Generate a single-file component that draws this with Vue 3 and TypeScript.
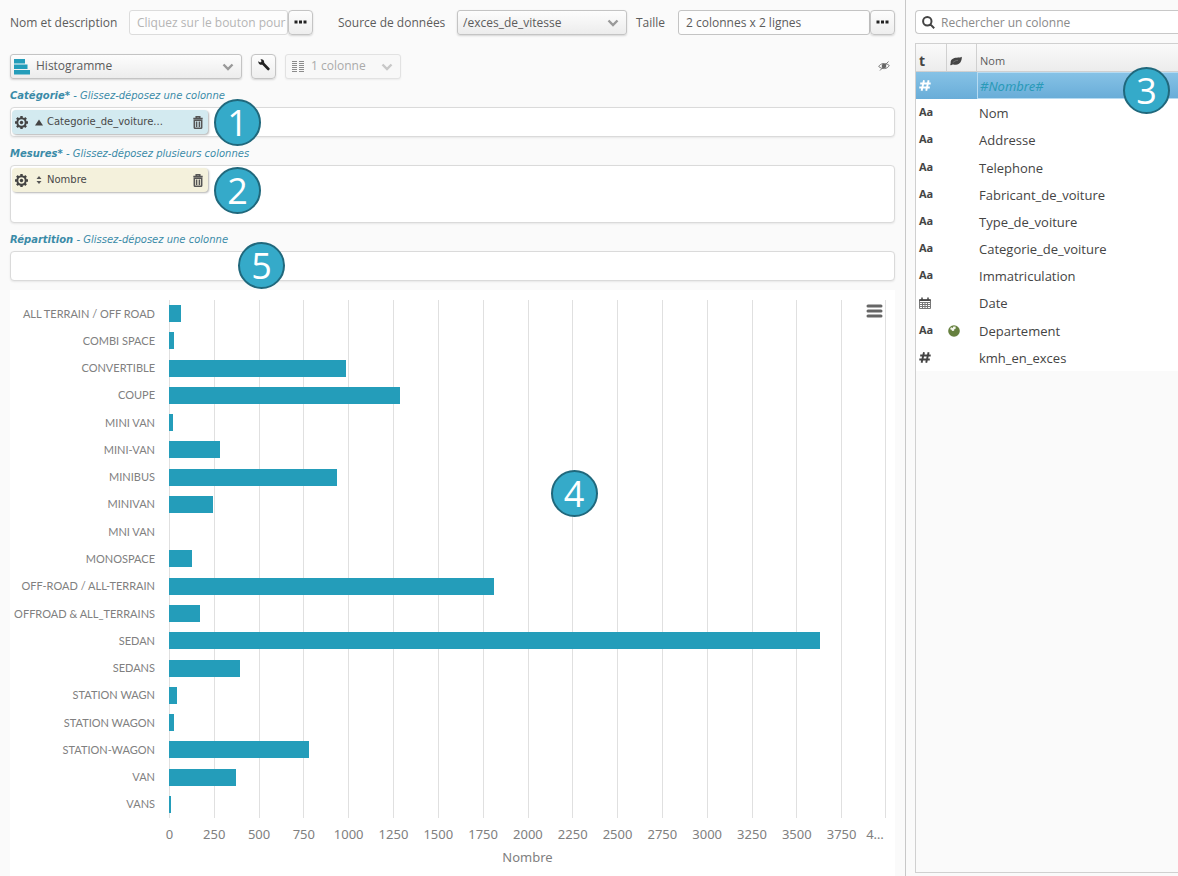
<script setup lang="ts">
import { ref } from 'vue'

interface Bar {
  label: string
  value: number
}

interface Column {
  name: string
  type: 'number' | 'text' | 'date'
  geo?: boolean
  selected?: boolean
}

const axisMax = 4000
const bars: Bar[] = [
  { label: 'ALL TERRAIN / OFF ROAD', value: 67 },
  { label: 'COMBI SPACE', value: 30 },
  { label: 'CONVERTIBLE', value: 988 },
  { label: 'COUPE', value: 1290 },
  { label: 'MINI VAN', value: 24 },
  { label: 'MINI-VAN', value: 283 },
  { label: 'MINIBUS', value: 940 },
  { label: 'MINIVAN', value: 247 },
  { label: 'MNI VAN', value: 0 },
  { label: 'MONOSPACE', value: 127 },
  { label: 'OFF-ROAD / ALL-TERRAIN', value: 1811 },
  { label: 'OFFROAD & ALL_TERRAINS', value: 174 },
  { label: 'SEDAN', value: 3630 },
  { label: 'SEDANS', value: 397 },
  { label: 'STATION WAGN', value: 46 },
  { label: 'STATION WAGON', value: 30 },
  { label: 'STATION-WAGON', value: 782 },
  { label: 'VAN', value: 376 },
  { label: 'VANS', value: 10 },
]
const ticks: string[] = [...Array.from({ length: 16 }, (_, i) => String(i * 250)), '4…']

const columns: Column[] = [
  { name: '#Nombre#', type: 'number', selected: true },
  { name: 'Nom', type: 'text' },
  { name: 'Addresse', type: 'text' },
  { name: 'Telephone', type: 'text' },
  { name: 'Fabricant_de_voiture', type: 'text' },
  { name: 'Type_de_voiture', type: 'text' },
  { name: 'Categorie_de_voiture', type: 'text' },
  { name: 'Immatriculation', type: 'text' },
  { name: 'Date', type: 'date' },
  { name: 'Departement', type: 'text', geo: true },
  { name: 'kmh_en_exces', type: 'number' },
]

const zones = [
  {
    title: 'Catégorie*',
    hint: 'Glissez-déposez une colonne',
    step: 1,
    chip: { text: 'Categorie_de_voiture...', kind: 'category' },
  },
  {
    title: 'Mesures*',
    hint: 'Glissez-déposez plusieurs colonnes',
    step: 2,
    chip: { text: 'Nombre', kind: 'measure' },
  },
  { title: 'Répartition', hint: 'Glissez-déposez une colonne', step: 5, chip: null },
]

const teeth = [0, 45, 90, 135]

const description = ref('')
const source = ref('/exces_de_vitesse')
const size = ref('2 colonnes x 2 lignes')
const chartType = ref('Histogramme')
const layout = ref('1 colonne')
const search = ref('')
</script>

<template>
  <div class="page">
    <main class="editor">
      <div class="bar">
        <label class="lbl wide" for="desc">Nom et description</label>
        <input id="desc" v-model="description" class="field desc" placeholder="Cliquez sur le bouton pour" />
        <button class="btn" aria-label="Modifier la description">
          <svg width="13" height="4" viewBox="0 0 13 4"><path d="M.5.5h3v3h-3zM5 .5h3v3H5zM9.500.5h3v3h-3z" /></svg>
        </button>
        <label class="lbl wide second" for="source">Source de données</label>
        <div class="pick source">
          <select id="source" v-model="source"><option>/exces_de_vitesse</option></select>
          <svg class="chev" width="12" height="8" viewBox="0 0 12 8"><path d="M1.500 1.500 6 6l4.500-4.500" /></svg>
        </div>
        <label class="lbl size-lbl" for="size">Taille</label>
        <input id="size" v-model="size" class="field size" />
        <button class="btn" aria-label="Modifier la taille">
          <svg width="13" height="4" viewBox="0 0 13 4"><path d="M.5.5h3v3h-3zM5 .5h3v3H5zM9.500.5h3v3h-3z" /></svg>
        </button>
      </div>

      <div class="bar tools">
        <div class="pick type">
          <select v-model="chartType" aria-label="Type de graphique"><option>Histogramme</option></select>
          <svg class="lead" width="16" height="16" viewBox="0 0 16 16">
            <path fill="#249dba" d="M0 0h11v4.500H0zM0 5.500h13.500V10H0zM0 11h16v4.500H0z" />
          </svg>
          <svg class="chev" width="12" height="8" viewBox="0 0 12 8"><path d="M1.500 1.500 6 6l4.500-4.500" /></svg>
        </div>
        <button class="btn" aria-label="Options">
          <svg width="12" height="12" viewBox="0 0 12 12">
            <path d="M.3 2.200 2.200 3.600 3.600 2.300 2.500.3C4.600-.2 6.500 1.200 6.200 3.700L11.500 9.200c.9 1.100-.9 2.900-2.100 1.900L4.300 5.700C2.200 6.300 0 4.700.3 2.200z" />
          </svg>
        </button>
        <div class="pick layout off">
          <select v-model="layout" disabled aria-label="Disposition"><option>1 colonne</option></select>
          <svg class="lead" width="13" height="12" viewBox="0 0 13 12">
            <path stroke="#8c8c8c" fill="none" d="M0 1.500h5M0 3.500h5M0 5.500h5M0 7.500h5M0 9.500h5M0 11.500h5M7 1.500h5M7 3.500h5M7 5.500h5M7 7.500h5M7 9.500h5M7 11.500h5" />
          </svg>
          <svg class="chev" width="12" height="8" viewBox="0 0 12 8"><path d="M1.500 1.500 6 6l4.500-4.500" /></svg>
        </div>
        <button class="eye" aria-label="Masquer">
          <svg width="12" height="10" viewBox="0 0 12 10">
            <path fill="none" stroke="#777" d="M.7 5.500C2.500 2.300 7 1.300 11.300 4.500 9 8.300 4.500 8.600.7 5.500zM2 9.500 10.500.5" />
            <circle cx="6" cy="5" r="2.300" fill="#666" />
          </svg>
        </button>
      </div>

      <section v-for="z in zones" :key="z.step" class="zone">
        <h2><b>{{ z.title }}</b> - {{ z.hint }}</h2>
        <div class="drop" :class="{ tall: z.step === 2 }">
          <div v-if="z.chip" class="chip" :class="z.chip.kind">
            <button class="ico" aria-label="Réglages">
              <svg width="13" height="13" viewBox="0 0 13 13">
                <path
                  v-for="a in teeth"
                  :key="a"
                  :transform="`rotate(${a} 6.5 6.5)`"
                  stroke="#444"
                  stroke-width="2.400"
                  d="M6.500 0v2.500M6.500 10.500V13"
                />
                <circle cx="6.500" cy="6.500" r="4.200" fill="none" stroke="#444" stroke-width="2" />
                <circle cx="6.500" cy="6.500" r="1.700" fill="#444" />
              </svg>
            </button>
            <svg v-if="z.step === 1" class="sort" width="8" height="8" viewBox="0 0 8 8"><path fill="#444" d="M0 7.500 4 1.500l4 6z" /></svg>
            <svg v-else class="sort" width="8" height="8" viewBox="0 0 8 8"><path fill="#555" d="M1.500 3 4 0l2.500 3zM1.500 5 4 8l2.500-3z" /></svg>
            <span class="chip-text">{{ z.chip.text }}</span>
            <button class="ico" aria-label="Supprimer">
              <svg width="10" height="13" viewBox="0 0 10 13">
                <path fill="none" stroke="#555" stroke-width="1.500" d="M.3 2.500h9.400M3.200 2.200V.7h3.600v1.500M1.300 4.300v7.200q0 .8.800.8h5.800q.8 0 .8-.8V4.300zM3.600 5.500v5.500M6.400 5.500v5.500" />
              </svg>
            </button>
          </div>
          <span class="badge" :class="'b' + z.step">{{ z.step }}</span>
        </div>
      </section>

      <section class="chart">
        <button class="menu" aria-label="Menu du graphique">
          <svg width="17" height="14" viewBox="0 0 17 14">
            <path stroke="#666" stroke-width="3" stroke-linecap="round" d="M2 2h13M2 7h13M2 12h13" />
          </svg>
        </button>
        <div class="names">
          <span v-for="b in bars" :key="b.label">{{ b.label }}</span>
        </div>
        <div class="plot">
          <div class="lines"><i v-for="n in 16" :key="n"></i></div>
          <div class="rows">
            <div v-for="b in bars" :key="b.label">
              <span class="fill" :style="{ width: (b.value / axisMax) * 100 + '%' }"></span>
            </div>
          </div>
          <span class="badge b4">4</span>
        </div>
        <div class="axis"><span v-for="t in ticks" :key="t">{{ t }}</span></div>
        <div class="axis-title">Nombre</div>
      </section>
    </main>

    <aside class="side">
      <div class="search">
        <svg width="13" height="13" viewBox="0 0 13 13">
          <path fill="none" stroke="#444" stroke-width="2" d="M9.500 5.300a4.200 4.200 0 1 1-8.400 0 4.200 4.200 0 0 1 8.400 0zM8.400 8.400l3.800 3.800" />
        </svg>
        <input v-model="search" aria-label="Rechercher" placeholder="Rechercher un colonne" />
      </div>
      <div class="list">
        <table>
          <thead>
            <tr>
              <th class="c-type"><b class="t">t</b></th>
              <th class="c-geo">
                <svg width="12" height="10" viewBox="0 0 12 10">
                  <path fill="#444" d="M11.800.8C12 5 10 8.700 6 8.700c-1.800 0-2.800-.5-3.500-.2C1.800 8.800 1.300 9.500.7 9.300c-1-.5.1-1.500 0-2.300C.2 3.500 3.500 1.700 6.500 1.700c2.500 0 4.200-.2 5.300-.9z" />
                  <path fill="none" stroke="#999" stroke-width=".5" d="M2.800 6.600C4.500 5 6 4.500 8 4.300" />
                </svg>
              </th>
              <th>Nom</th>
            </tr>
          </thead>
          <tbody>
            <tr v-for="c in columns" :key="c.name" :class="{ on: c.selected }">
              <td>
                <span v-if="c.type === 'text'" class="aa">Aa</span>
                <svg v-else-if="c.type === 'number'" class="hash" width="12" height="11" viewBox="0 0 12 11">
                  <path fill="none" stroke="currentColor" stroke-width="1.900" d="M5 .3 2.600 10.700M9.600.3 7.200 10.700M1.200 3.500h10.500M.3 7.500h10.500" />
                </svg>
                <svg v-else width="12" height="12" viewBox="0 0 12 12">
                  <path fill="none" stroke="#777" d="M.5 2.500h11v9H.5zM.5 5.500h11M.5 7.500h11M.5 9.500h11M3.500 5v6.500M6 5v6.500M8.500 5v6.500" />
                  <path fill="none" stroke="#444" stroke-width="1.500" d="M.5 3.200h11M3 .5v2.500M9 .5v2.500" />
                </svg>
              </td>
              <td class="geo">
                <svg v-if="c.geo" width="12" height="12" viewBox="0 0 12 12">
                  <circle cx="6" cy="6" r="5.800" fill="#66803f" />
                  <path fill="#f4f6ee" d="M2 4.200 3 2.300 4.700 3l.6-1.600 2.200.2.3 2-1.500.6-.2 1.600-1.900.3-1-1.500z" />
                </svg>
              </td>
              <td class="name">{{ c.name }}</td>
            </tr>
          </tbody>
        </table>
        <span class="badge b3">3</span>
      </div>
    </aside>
  </div>
</template>

<style>
body {
  background: #fafafa;
}
</style>

<style scoped>
* {
  box-sizing: border-box;
}
.page {
  display: grid;
  grid-template-columns: minmax(0, 1fr) 273px;
  min-height: 100vh;
  background: #fafafa;
  color: #5c5c5c;
  font: 12px/16px 'Open Sans', 'Noto Sans', sans-serif;
}
input,
select,
button {
  font: inherit;
  color: inherit;
  margin: 0;
}
button {
  cursor: pointer;
}
svg {
  display: block;
  flex: none;
}
.editor {
  display: flex;
  flex-direction: column;
  padding: 10px 10px 0;
}
.bar {
  display: flex;
  align-items: center;
  height: 25px;
}
.tools {
  margin: 18px 0 8px;
  gap: 9px;
  height: 26px;
}
.lbl.wide {
  width: 119px;
}
.second {
  margin-left: 25px;
}
.size-lbl {
  width: 42px;
  margin-left: 9px;
}
.field {
  height: 25px;
  border: 1px solid #c4c4c4;
  border-radius: 3px;
  background: #fdfdfd;
  padding: 0 0 0 7px;
  min-width: 0;
}
.desc {
  width: 159px;
  border-color: #dcdcdc;
}
.field::placeholder {
  color: #b5b5b5;
}
.size {
  flex: 1;
}
.btn {
  display: flex;
  align-items: center;
  justify-content: center;
  width: 25px;
  height: 25px;
  padding: 0 0 2px;
  border: 1px solid #c4c4c4;
  border-radius: 4px;
  background: linear-gradient(#fdfdfd, #eee);
  box-shadow: 0 1px 2px rgba(0, 0, 0, 0.15);
  fill: #222;
}
.pick {
  position: relative;
  height: 25px;
}
.pick select {
  appearance: none;
  width: 100%;
  height: 100%;
  padding: 0 24px 0 5px;
  border: 1px solid #c4c4c4;
  border-radius: 3px;
  background: linear-gradient(#fdfdfd, #ececec);
  box-shadow: 0 1px 2px rgba(0, 0, 0, 0.15);
  opacity: 1;
}
.source {
  width: 170px;
}
.type {
  width: 232px;
}
.type select {
  padding-left: 25px;
}
.layout {
  width: 116px;
}
.layout select {
  padding-left: 25px;
  border-color: #e2e2e2;
  background: #f8f8f8;
  color: #aaa;
  box-shadow: 0 1px 2px rgba(0, 0, 0, 0.06);
}
.chev {
  position: absolute;
  right: 8px;
  top: 9px;
  fill: none;
  stroke: #999;
  stroke-width: 2.4;
  pointer-events: none;
}
.off .chev {
  stroke: #c8c8c8;
}
.lead {
  position: absolute;
  left: 4px;
  top: 5px;
  pointer-events: none;
}
.off .lead {
  left: 7px;
  top: 6px;
}
.eye {
  margin-left: auto;
  padding: 0 5px 0 0;
  border: 0;
  background: none;
}
h2 {
  margin: 0;
  height: 20px;
  font: italic 10px/18px 'DejaVu Sans', Verdana, sans-serif;
  color: #3a8ba8;
}
.drop {
  position: relative;
  min-height: 30px;
  margin-bottom: 8px;
  padding: 2px 1px;
  border: 1px solid #dadada;
  border-radius: 4px;
  background: #fff;
  box-shadow: 0 1px 2px rgba(0, 0, 0, 0.08);
}
.drop.tall {
  min-height: 58px;
}
.chip {
  display: flex;
  align-items: center;
  width: 196px;
  height: 24px;
  padding: 0 5px 0 3px;
  border-radius: 4px;
  background: #d3eaf0;
  box-shadow: 1px 1px 2px rgba(0, 0, 0, 0.3);
  font: 10px/14px 'DejaVu Sans', Verdana, sans-serif;
  color: #484848;
}
.chip.measure {
  background: #f4f1dc;
}
.chip-text {
  flex: 1;
}
.ico {
  padding: 0;
  border: 0;
  background: none;
}
.sort {
  margin: 0 4px 0 7px;
}
.badge {
  position: absolute;
  z-index: 2;
  width: 47px;
  height: 47px;
  border: 2px solid #20687c;
  border-radius: 50%;
  background: #35aac9;
  color: #fff;
  font: 36px/43px 'Open Sans', 'Noto Sans', sans-serif;
  text-align: center;
}
.b1 {
  left: 203px;
  top: -9px;
}
.b2 {
  left: 203px;
  top: 1px;
}
.b5 {
  left: 227px;
  top: -10px;
}
.b4 {
  left: calc(50% + 23px);
  top: 170px;
}
.b3 {
  left: 207px;
  top: 23px;
}
.chart {
  position: relative;
  flex: 1;
  display: grid;
  grid-template-columns: 145px minmax(0, 1fr);
  grid-template-rows: 518px 32px 20px;
  align-content: start;
  margin-top: 1px;
  padding: 10px 9px 0 0;
  background: #fff;
  color: #808080;
}
.names,
.rows {
  display: grid;
  grid-template-rows: repeat(19, 1fr);
  align-items: center;
}
.names {
  justify-items: end;
  font: 11px/14px Lato, sans-serif;
}
.plot {
  position: relative;
  display: grid;
  margin-left: 14px;
}
.lines,
.rows {
  grid-area: 1 / 1;
}
.lines {
  display: grid;
  grid-template-columns: repeat(16, 1fr);
}
.lines i {
  border-left: 1px solid #e0e0e0;
}
.lines i:last-child {
  border-right: 1px solid #e0e0e0;
}
.fill {
  display: block;
  height: 17px;
  background: #249dba;
}
.menu {
  position: absolute;
  right: 12px;
  top: 14px;
  padding: 0;
  border: 0;
  background: none;
}
.axis {
  grid-column: 1 / 3;
  display: grid;
  grid-template-columns: repeat(16, minmax(0, 1fr)) 22px;
  align-items: center;
  margin-left: 137px;
  font: 13px/18px 'Noto Sans', sans-serif;
  text-align: center;
}
.axis-title {
  grid-column: 2;
  margin-left: 14px;
  text-align: center;
  font: 13px/14px 'Noto Sans', sans-serif;
}
.side {
  display: flex;
  flex-direction: column;
  border-left: 1px solid #c8c8c8;
  padding: 10px 0 3px 9px;
  min-width: 0;
}
.search {
  display: flex;
  align-items: center;
  height: 24px;
  gap: 6px;
  padding-left: 6px;
  border: 1px solid #c8c8c8;
  border-right: 0;
  border-radius: 4px 0 0 4px;
  background: #fff;
}
.search input {
  flex: 1;
  min-width: 0;
  border: 0;
  padding: 1px 0 0;
  background: none;
}
.search input::placeholder {
  color: #8a8a8a;
}
.list {
  position: relative;
  flex: 1;
  margin-top: 9px;
  border: 1px solid #d0d0d0;
  border-right: 0;
}
table {
  width: 100%;
  height: 327px;
  border-collapse: separate;
  border-spacing: 0;
  table-layout: fixed;
}
thead tr {
  height: 28px;
  background: linear-gradient(#fafafa, #ececec);
}
th {
  padding: 7px 0 0 3px;
  border-bottom: 1px solid #d0d0d0;
  border-right: 1px solid #d0d0d0;
  font-weight: 400;
  font-size: 11px;
  text-align: left;
}
th:last-child {
  border-right: 0;
}
.c-type {
  width: 31px;
}
.c-geo {
  width: 30px;
}
.t {
  font-size: 14px;
  line-height: 16px;
  color: #444;
}
tbody {
  background: #fff;
}
td {
  padding: 1px 0 0 3px;
  height: 27px;
  vertical-align: middle;
}
td.geo {
  padding-left: 1px;
}
.name {
  padding-left: 2px;
  font: 500 13px/16px 'Open Sans', 'Noto Sans', sans-serif;
  color: #444;
}
.aa {
  display: block;
  padding-bottom: 2px;
  font: bold 11px/14px 'Open Sans', sans-serif;
  color: #444;
}
.hash {
  color: #444;
}
.on td {
  padding-top: 0;
  background: linear-gradient(#86c2e6, #69add8);
}
.on .name {
  border: 1px solid #b6dbf2;
  border-right: 0;
  font-family: 'Noto Sans', 'Open Sans', sans-serif;
  font-style: italic;
  font-weight: 400;
  color: #2a9ab8;
}
.on .hash {
  color: #fff;
}
</style>
